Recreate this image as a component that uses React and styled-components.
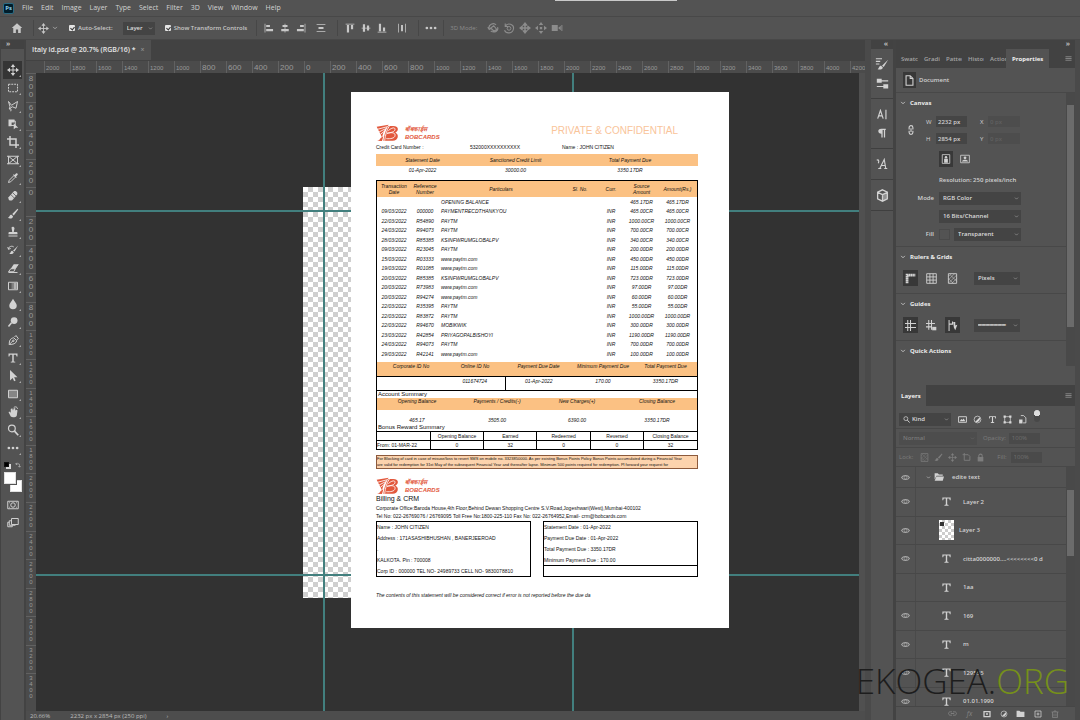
import React from 'react';
import styled, { createGlobalStyle } from 'styled-components';

const GlobalStyle = createGlobalStyle`
  * { box-sizing: border-box; }
  body {
    margin: 0;
    background: #323232;
    color: #d2d2d2;
    font-family: "Open Sans", "Noto Sans", sans-serif;
    font-size: 7px;
    line-height: 10px;
  }
  button, input, select { font: inherit; color: inherit; border: 0; padding: 0; background: none; margin: 0; }
`;

/* ---------- icons ---------- */

const Svg = styled.svg`
  display: block;
  flex: none;
  width: ${p => p.$size || 14}px;
  height: ${p => p.$size || 14}px;
  fill: none;
  stroke: currentColor;
  stroke-width: 1.3;
`;

const F = { fill: 'currentColor', stroke: 'none' };

const icons = {
  home: <path {...F} d="M8 1.5 1 8h2v6.5h3.5V10h3v4.500H13V8h2z" />,
  move: <><path d="M8 3v10M3 8h10" /><path {...F} d="m8 0 3 4H5zM8 16l3-4H5zM0 8l4-3v6zM16 8l-4-3v6z" /></>,
  marquee: <path strokeDasharray="2.500 1.300" d="M2 3h12v10H2z" />,
  lasso: <path d="M2 2l4 5 8-5-2 9-5-2-4 3 1-3zM3 12c2-1 3 0 2 3" />,
  objectSelect: <><path {...F} d="M2 2h8v4H6v5H2z" /><path d="M5 4h6v6H5z" /><path {...F} d="m9 7 6 6h-3.500L9 15z" /></>,
  crop: <path strokeWidth="2" d="M4 0v12h12M0 4h12v12" />,
  frame: <path d="M2 3h12v10H2zM2 3l12 10M14 3 2 13M0 3h2M14 3h2M0 13h2M14 13h2" />,
  eyedropper: <><path d="M9 5 3 11l-1 3 3-1 6-6" /><path {...F} d="m8 4 4 4 1-1-1-1 2-2c1-1 0-3-2-2l-2 2-1-1z" /></>,
  heal: <><path {...F} d="M9 2c2-2 6 1 4.500 4L7 13.500c-3 2-6-1-5-4z" /><path stroke="#535353" strokeWidth="1" d="m5 6 5 5M8 4l4 4" /></>,
  brush: <path {...F} d="M14 1 7 8l2 2 6-8zM6 9c-3 0-2 3-5 4 3 2 7 1 7-2z" />,
  stamp: <path {...F} d="M6 2c1-2 4-1 4 1L9 8h4c1 0 1 1 1 3H2c0-2 0-3 1-3h4zM2 12.500h12V14H2z" />,
  history: <><path {...F} d="M15 2 8 9l2 1zM7 9c-2 0-2 3-4 4 3 1 6 0 6-2z" /><path d="M2 7c0-4 5-5 7-3M1 4l1 3 3-1" /></>,
  eraser: <><path {...F} d="M9 3h6l-4 6H5z" /><path d="M5 9h6l-2 4H2zM11 9l4-6M2 14h12" /></>,
  gradient: <><path d="M2 3h12v10H2z" /><path {...F} opacity=".35" d="M6 4h3v8H6z" /><path {...F} opacity=".75" d="M9 4h4v8H9z" /></>,
  drop: <path {...F} d="M8 1c2 4 5 6 5 9a5 5 0 0 1-10 0c0-3 3-5 5-9z" />,
  dodge: <><circle {...F} cx="9.500" cy="6" r="4.500" /><path strokeWidth="2" d="m6 9-4 5" /></>,
  pen: <><path d="M3 14c0-5 1-8 6-9l4 4c-1 4-5 5-10 5zl5-5M10 4l2-2 3 4-2 2" /><circle cx="8.500" cy="9" r="1" /></>,
  type: <path {...F} d="M2 2h12v4h-1.200L12 3.600H9V12.500l2 .6V14H5v-.9l2-.6V3.600H4L3.200 6H2z" />,
  arrow: <path {...F} d="M4 0v14l3.500-3.500 2 4.500 2-1-2-4.500H14z" />,
  rect: <path fill="#858585" d="M2 3h12v10H2z" />,
  hand: <><path {...F} d="M2 8c2-1 2 0 3 1V4l2-1 1 3 1-3h2v3l2-1 1 1-1 7c-1 2-6 3-8 1z" /><path d="M9 2c3-2 5 0 5 2" /></>,
  zoom: <><circle cx="6.500" cy="6" r="4.500" strokeWidth="1.600" /><path strokeWidth="2.200" d="m10 9.500 5 5.500" /></>,
  dots: <><circle {...F} cx="2.500" cy="8" r="1.800" /><circle {...F} cx="8" cy="8" r="1.800" /><circle {...F} cx="13.500" cy="8" r="1.800" /></>,
  mask: <><path d="M1 3h14v10H1z" /><circle cx="8" cy="8" r="3" /><path d="M3 5h1M12 5h1M3 11h1M12 11h1" /></>,
  screens: <path d="M6 2h9v8H6zM6 5H3v6h8v-1M3 7H1v6h6v-2" />,
  alignLeft: <path {...F} d="M1 1h1.200v14H1zM3.500 3h6v3.500h-6zM3.500 9.500h11V13h-11z" />,
  alignCenter: <path {...F} d="M7.400 1h1.200v14H7.400zM4 3h8v3.500H4zM2 9.500h12V13H2z" />,
  alignRight: <path {...F} d="M13.800 1H15v14h-1.200zM6.500 3h6v3.500h-6zM1.500 9.500h11V13h-11z" />,
  distribute: <path {...F} d="M1 2h14v1.200H1zM4 6.500h8v3H4zM1 12.800h14V14H1z" />,
  alignTop: <path {...F} d="M1 1h14v1.200H1zM3 3h3.500v12H3zM9.500 3H13v7H9.500z" />,
  alignMiddle: <path {...F} d="M1 7.400h14v1.200H1zM3 2h3.500v12H3zM9.500 4H13v8H9.500z" />,
  alignBottom: <path {...F} d="M1 13.800h14V15H1zM3 1h3.500v12H3zM9.500 7H13v6H9.500z" />,
  distributeV: <path {...F} d="M2 1h1.200v14H2zM6.500 3h3v10h-3zM12.800 1H14v14h-1.200z" />,
  orbit: <path strokeWidth="1.600" d="M3 9C1 4 9 0 12 4M5 12c5 3 11 0 9-5M1 7l2 3 3-2M9 5l4 5-4 2-4-4z" />,
  roll: <><path strokeWidth="1.500" d="M3 2v4h4M3 6c3-6 12-3 11 3-1 7-10 7-12 2" /><circle cx="8" cy="8.500" r="2.500" /></>,
  pan: <><path strokeWidth="2" d="M8 3v10M3 8h10" /><path {...F} d="m8 0 4 5H4zM8 16l4-5H4zM0 8l5-4v8zM16 8l-5-4v8z" /></>,
  slide: <path {...F} d="m8 0 3 4H5zM8 16l3-4H5zM0 8l4-3v6zM16 8l-4-3v6zM6.500 6.500h3v3h-3z" />,
  camera: <><path {...F} d="M1 4h8v8H1zM9.500 8 13 5v6z" /><path d="M14.500 4v8" /></>,
  chevron: <path strokeWidth="1.800" d="m3 5 5 5 5-5" />,
  menu: <path strokeWidth="1.500" d="M1 4h14M1 8h14M1 12h14" />,
  brushes: <><path d="M1 2h7M1 5h5M1 8h4" /><path {...F} d="M15 3 8 10l2 1.500zM7 10c-3 0-2 3-4 4 3 1 6 0 6-2z" /></>,
  sliders: <path {...F} d="M1 2h6v5H1zM7 4h8v1.400H7zM9 9h6v5H9zM1 11h8v1.400H1z" />,
  character: <path strokeWidth="1.700" d="m1 14 4-12 4 12M2.500 10h5M13 1v14" />,
  paragraph: <path {...F} d="M14 1H7C0 1 1 9 7 9v6h2V3h2v12h2V3h1z" />,
  glyphs: <path strokeWidth="1.500" d="M5 14 11 2l2 12M7 10h6M3 14h4M11 14h4M1 3c3-2 3 2 2 4" />,
  cube: <><path strokeWidth="1.600" d="m8 1 6 3v8l-6 3-6-3V4zM2 4l6 3 6-3M8 7v8" /><path {...F} opacity=".5" d="m8 7 6-3v8l-6 3z" /></>,
  file: <path strokeWidth="1.600" d="M3 1h6l4 4v10H3zM9 1v4h4" />,
  link: <path strokeWidth="1.800" d="M5 7V4c0-4 6-4 6 0v3M5 9v3c0 4 6 4 6 0V9M8 5v6" />,
  portrait: <><path d="M2 1h12v14H2z" /><circle {...F} cx="8" cy="5" r="2" /><path {...F} d="M5 7.500h6V14H5z" /></>,
  landscape: <><path d="M1 2h14v12H1z" /><circle {...F} cx="8" cy="6" r="2.200" /><path {...F} d="M3 12c1-4 9-4 10 0z" /></>,
  rulers: <path strokeWidth="4" strokeDasharray="2.400 .4" d="M3 15V3h12" />,
  grid: <path d="M1 1h14v14H1zM5.700 1v14M10.300 1v14M1 5.700h14M1 10.300h14" />,
  pixelGrid: <><path d="M2 1h12v14H2z" /><path opacity=".6" d="m2 5 4-4M2 10l9-9M3 14 14 3M7 15l7-7M2 8l7 7M5 3l9 9" /></>,
  guides: <path strokeWidth="1.500" d="M4 0v16M8 0v16M0 5h16M0 11h16" />,
  guidesLock: <><path strokeWidth="1.500" d="M4 0v14M8 0v14M0 5h13M0 10h8" /><path {...F} d="M9 10h6v5H9z" /></>,
  smartGuides: <><path strokeWidth="1.500" d="M3 0v16M8 2v5M3 6h5" /><path {...F} d="M9 3h3v5l3-1-3 8-2-4z" /></>,
  image: <><path strokeWidth="1.600" d="M1 3h14v10H1z" /><path {...F} d="m3 11 3-4 2 2 2-3 3 5z" /></>,
  adjust: <><circle cx="8" cy="8" r="6" /><path {...F} d="M4 12A6 6 0 0 0 12 4z" /></>,
  shape: <><path d="M3 3h10v10H3z" /><path {...F} d="M1 1h4v4H1zM11 1h4v4h-4zM1 11h4v4H1zM11 11h4v4h-4z" /></>,
  artboard: <path strokeWidth="1.600" d="M4 0v13h10V6L11 3H1" />,
  smart: <><path strokeWidth="1.500" d="M5 1h5l4 4v9H9" /><path {...F} d="M2 8h6v7H2z" /></>,
  lock: <><path strokeWidth="1.800" d="M5 7V5c0-4 6-4 6 0v2" /><path {...F} d="M3 7h10v8H3z" /></>,
  eye: <><path strokeWidth="1.800" d="M1 8c3-5 11-5 14 0-3 5-11 5-14 0z" /><circle cx="8" cy="8" r="2.500" /></>,
  folder: <path {...F} d="M1 2h5l2 2h6v2H4l-3 6zM4 7h12l-2 7H1z" />,
  folderClosed: <path {...F} d="M1 3h5l2 2h7v9H1z" />,
  plus: <path strokeWidth="1.500" d="M2 2h12v12H2zM8 5v6M5 8h6" />,
  maskAdd: <><path strokeWidth="2.500" d="M2 3h12v10H2z" /><circle {...F} cx="8" cy="8" r="2" /></>,
  trash: <path strokeWidth="1.500" d="M1 4h14M6 4V2h4v2M3 4v11h10V4M6 7v6M10 7v6" />,
  chain: <path strokeWidth="1.500" d="M7 5H4c-4 0-4 6 0 6h3M9 5h3c4 0 4 6 0 6H9M5 8h6" />,
  swap: <path strokeWidth="1.600" d="M5 2 2 5l3 3M2 5h8c2 0 2 1 2 8M9 11l3 3 3-3" />,
};

const Icon = ({ name, size }) => (
  <Svg viewBox="0 0 16 16" $size={size} aria-hidden="true">{icons[name]}</Svg>
);

/* ---------- frame ---------- */

const Window = styled.div`
  position: relative;
  display: flex;
  flex-direction: column;
  height: 100vh;
  overflow: hidden;
  background: #535353;
`;

const MenuBar = styled.nav`
  position: relative;
  display: flex;
  align-items: center;
  gap: 8px;
  height: 17px;
  padding-left: 3px;
  border-bottom: 1px solid #484848;
  font-weight: 500;
  button { line-height: 12px; }
`;

const PsLogo = styled.span`
  width: 11px;
  height: 11px;
  border: 1px solid #2b6b83;
  border-radius: 2px;
  background: #001d2b;
  color: #8fd0ee;
  font-size: 6px;
  font-weight: 700;
  line-height: 8px;
  text-align: center;
`;

const TitleNotch = styled.div`
  position: absolute;
  top: 0;
  left: 555px;
  width: 122px;
  height: 1px;
  background: #c9c9c9;
`;

const OptionsBar = styled.div`
  display: flex;
  align-items: center;
  height: 23px;
  padding-left: 9px;
  border-bottom: 1px solid #484848;
  color: #c8c8c8;
  font-size: 6px;
`;

const Group = styled.div`
  display: flex;
  align-items: center;
  gap: ${p => p.$gap || 0}px;
  padding: 0 ${p => p.$pad || 0}px;
  border-left: ${p => (p.$line ? '1px solid #474747' : 'none')};
  color: ${p => (p.$dim ? '#8c8c8c' : 'inherit')};
`;

const IconButton = styled.button`
  display: grid;
  place-items: center;
  width: ${p => p.$w || 16}px;
  height: ${p => p.$h || 16}px;
  background: ${p => (p.$on ? '#383838' : 'transparent')};
  color: ${p => (p.$dim ? '#858585' : 'inherit')};
`;

const Check = styled.label`
  display: flex;
  align-items: center;
  gap: 3px;
  font-weight: 600;
  white-space: nowrap;
  input {
    appearance: none;
    width: 6px;
    height: 6px;
    border-radius: 1px;
    background: #e4e4e4;
  }
  input:checked::after {
    content: "";
    display: block;
    width: 2px;
    height: 3px;
    margin: 1px 2px;
    border: solid #333;
    border-width: 0 1px 1px 0;
    rotate: 40deg;
  }
`;

const SelectWrap = styled.span`
  position: relative;
  display: block;
  width: ${p => p.$w}px;
  color: ${p => (p.$dim ? '#7a7a7a' : '#dcdcdc')};
  select {
    appearance: none;
    display: block;
    width: 100%;
    height: 13px;
    padding-left: ${p => p.$indent || 4}px;
    background: ${p => (p.$dim ? '#4d4d4d' : '#444')};
    font-size: 6px;
    font-weight: 600;
  }
  svg { position: absolute; right: 2px; top: 4px; opacity: .7; pointer-events: none; }
`;

const Select = ({ label, value, ...rest }) => (
  <SelectWrap {...rest}>
    <select aria-label={label} defaultValue={value}><option>{value}</option></select>
    <Icon name="chevron" size={5} />
  </SelectWrap>
);

const Body = styled.div`
  display: flex;
  flex: 1;
  min-height: 0;
  background: #424242;
`;

const DockHead = styled.div`
  height: 9px;
  padding: 0 5px;
  background: #424242;
  color: #bdbdbd;
  font-size: 7px;
  font-weight: 700;
  line-height: 8px;
  text-align: ${p => p.$align || 'left'};
`;

const Toolbox = styled.aside`
  width: 26px;
  border: solid #434343;
  border-width: 0 2px 0 1px;
  background: #535353;
`;

const Tools = styled.div`
  display: grid;
  justify-items: center;
  padding-top: 12px;
`;

const Tool = styled.button`
  position: relative;
  display: grid;
  place-items: center;
  width: 19px;
  height: 18px;
  background: ${p => (p.$on ? '#353535' : 'transparent')};
  &::after {
    content: "";
    position: absolute;
    right: 1px;
    bottom: 2px;
    border: 1px solid;
    border-color: transparent #aaa #aaa transparent;
  }
`;

const SwatchTop = styled.div`
  display: flex;
  justify-content: space-between;
  width: 17px;
  height: 15px;
  padding-top: 5px;
`;

const DefaultSwatch = styled.i`
  width: 5px;
  height: 5px;
  border: 1px solid #111;
  background: #000;
  box-shadow: 2px 2px 0 #ddd;
`;

const Swatches = styled.div`
  position: relative;
  width: 18px;
  height: 20px;
  margin-bottom: 4px;
  i { position: absolute; width: 12px; height: 12px; background: #fff; border: 1px solid #e0e0e0; }
  i:first-child { right: 0; bottom: 0; }
  i:last-child { left: 0; top: 0; outline: 1px solid #535353; }
`;

/* ---------- document window ---------- */

const DocumentArea = styled.main`
  display: flex;
  flex: 1;
  flex-direction: column;
  min-width: 0;
  border-right: 6px solid #4a4a4a;
`;

const TabStrip = styled.div`
  height: 21px;
  background: #424242;
`;

const DocTab = styled.div`
  display: inline-flex;
  align-items: center;
  gap: 5px;
  height: 20px;
  padding: 0 6px;
  background: #505050;
  font-size: 7px;
  font-weight: 600;
  color: #e6e6e6;
  button { color: #8f8f8f; }
`;

const RulerTop = styled.div`
  display: flex;
  height: 12px;
  padding-left: 18px;
  overflow: hidden;
  background: #4b4b4b;
  color: #9a9a9a;
  font-family: "Liberation Sans", sans-serif;
  line-height: 14px;
`;

const RulerMark = styled.span`
  flex: 0 0 26px;
  padding-left: 1px;
  border-left: 1px solid #616161;
  font-size: ${p => (p.$long ? 6 : 8)}px;
`;

const Workspace = styled.div`
  display: flex;
  flex: 1;
  min-height: 0;
`;

const RulerLeft = styled.div`
  display: flex;
  flex-direction: column;
  width: 10px;
  padding-bottom: 9px;
  background: #4b4b4b;
  color: #9a9a9a;
  font-family: "Liberation Sans", sans-serif;
  text-align: center;
`;

const RulerStack = styled.div`
  display: flex;
  flex: 1 1 0;
  flex-direction: column;
  min-height: 0;
  padding-top: 1px;
  border-top: 1px solid #616161;
  font-size: ${p => (p.$long ? 6 : 8)}px;
  line-height: ${p => (p.$long ? 6 : 8)}px;
`;

const Canvas = styled.div`
  position: relative;
  flex: 1;
  overflow: hidden;
  border-right: 6px solid #505050;
  background: #323232;
`;

const Guide = styled.i`
  position: absolute;
  background: #427f7e;
  ${p => (p.$x ? `left: ${p.$x}px; top: 0; bottom: 0; width: 2px;` : `top: ${p.$y}px; left: 0; right: 0; height: 2px;`)}
`;

const Artboard = styled.div`
  position: absolute;
  left: 267px;
  top: 114px;
  width: 269px;
  height: 411px;
  background: repeating-conic-gradient(#cfcfcf 0 25%, #fff 0 50%) 0 0 / 10px 10px;
`;

const StatusBar = styled.footer`
  display: flex;
  gap: 20px;
  height: 9px;
  padding-left: 4px;
  background: #4d4d4d;
  color: #bdbdbd;
  font-size: 6px;
  line-height: 10px;
`;

/* ---------- statement ---------- */

const Page = styled.article`
  position: absolute;
  left: 315px;
  top: 19px;
  width: 378px;
  height: 536px;
  padding: 32px 31px 0 25px;
  background: #fff;
  color: #111;
  font-family: "Liberation Sans", sans-serif;
  font-size: 5px;
  line-height: 8px;
`;

const PageHead = styled.header`
  display: flex;
  justify-content: space-between;
  height: 19px;
  padding-right: 20px;
`;

const Confidential = styled.h1`
  margin: 0;
  color: #f9c49a;
  font-size: 10px;
  font-weight: 400;
  line-height: 13px;
`;

const Brand = styled.div`
  display: flex;
  gap: 5px;
  height: 18px;
  color: #e2583c;
  svg { width: 24px; height: 18px; }
`;

const BrandName = styled.div`
  padding-top: 1px;
  font-size: 6px;
  font-weight: 700;
  font-style: italic;
  line-height: 8px;
`;

const HolderRow = styled.div`
  display: grid;
  grid-template-columns: 94px 92px 1fr;
  height: 11px;
`;

const Table = styled.table`
  width: 100%;
  height: ${p => (p.$h ? `${p.$h}px` : 'auto')};
  table-layout: fixed;
  border-collapse: collapse;
  font-style: italic;
  text-align: center;
  th, td { padding: 0; font-weight: 400; white-space: nowrap; }
  td.left { text-align: left; padding-left: 2px; }
`;

const OrangeHead = styled.thead`
  background: #fbc183;
  tr { height: ${p => p.$h}px; }
  th { vertical-align: ${p => p.$align || 'middle'}; line-height: 6px; }
`;

const Row = styled.tr`
  height: ${p => p.$h}px;
  vertical-align: ${p => p.$align || 'middle'};
`;

const Frame = styled.section`
  margin-top: 6px;
  border: 1px solid #000;
`;

const Transactions = styled(Table)`
  line-height: 6px;
  tbody td { font-size: 5px; }
`;

const DueTable = styled(Table)`
  margin-top: 3px;
  border-bottom: 1px solid #000;
  th { line-height: 9px; }
  tbody { border-top: 1px solid #000; }
  tbody td:nth-child(3) { border-left: 1px solid #000; }
`;

const SectionTitle = styled.h2`
  height: 7px;
  margin: 0;
  padding-left: 1px;
  font-size: 6px;
  font-weight: 400;
  line-height: 7px;
`;

const BonusTable = styled(Table)`
  font-style: normal;
  line-height: 6px;
  th, td { border: 1px solid #000; }
  tr > *:first-child { border-left: 0; text-align: left; }
  tr > *:last-child { border-right: 0; }
  tr:last-child > * { border-bottom: 0; }
`;

const Note = styled.p`
  height: 14px;
  margin: 5px 0 8px;
  border: 1px solid #8c5a3c;
  background: #fcd3ad;
  font-size: 4px;
  line-height: 6px;
  white-space: nowrap;
  overflow: hidden;
`;

const Billing = styled.h2`
  margin: 0 0 1px;
  font-size: 7px;
  font-weight: 400;
  line-height: 8px;
`;

const Line = styled.p`
  margin: 0;
  white-space: nowrap;
`;

const Boxes = styled.div`
  display: grid;
  grid-template-columns: 155px 155px;
  gap: 12px;
  height: 56px;
  margin-top: 1px;
  line-height: 11px;
`;

const Box = styled.div`
  height: 56px;
  border: 1px solid #000;
`;

const BoxTop = styled.div`
  height: 44px;
  border-bottom: 1px solid #000;
`;

const Disclaimer = styled.p`
  margin: 14px 0 0;
  font-style: italic;
  white-space: nowrap;
`;

const transactions = [
  ['', '', 'OPENING BALANCE', '', '465.17DR'],
  ['09/03/2022', '000000', 'PAYMENTRECDTHANKYOU', 'INR', '465.00CR'],
  ['22/03/2022', 'R54890', 'PAYTM', 'INR', '1000.00CR'],
  ['24/03/2022', 'R94073', 'PAYTM', 'INR', '700.00CR'],
  ['28/03/2022', 'R85385', 'KSINFWRUMGLOBALPV', 'INR', '340.00CR'],
  ['09/03/2022', 'R23045', 'PAYTM', 'INR', '200.00DR'],
  ['15/03/2022', 'R03333', 'www.paytm.com', 'INR', '450.00DR'],
  ['19/03/2022', 'R01085', 'www.paytm.com', 'INR', '115.00DR'],
  ['20/03/2022', 'R85385', 'KSINFWRUMGLOBALPV', 'INR', '723.00DR'],
  ['20/03/2022', 'R73983', 'www.paytm.com', 'INR', '97.00DR'],
  ['20/03/2022', 'R94274', 'www.paytm.com', 'INR', '60.00DR'],
  ['22/03/2022', 'R35395', 'PAYTM', 'INR', '55.00DR'],
  ['22/03/2022', 'R83872', 'PAYTM', 'INR', '1000.00DR'],
  ['22/03/2022', 'R94670', 'MOBIKWIK', 'INR', '300.00DR'],
  ['23/03/2022', 'R42854', 'PRIYAGOPALBISHOYI', 'INR', '1190.00DR'],
  ['24/03/2022', 'R94073', 'PAYTM', 'INR', '700.00DR'],
  ['29/03/2022', 'R42141', 'www.paytm.com', 'INR', '100.00DR'],
];

const Logo = () => (
  <Brand>
    <svg viewBox="0 0 72 54" aria-hidden="true">
      <path fill="currentColor" d="M2 8 38 2C28 12 21 24 18 40zM3 50c5 0 8-2 11-8l8-5-4 14z" />
      <path fill="currentColor" d="M36 6h16c16 0 18 14 6 20 12 4 10 24-8 24H22c2-12 6-30 14-44z" />
      <path fill="none" stroke="#fff" strokeWidth="2.500" d="M4 16 34 8M9 24l20-10M13 31l13-10M40 6C32 18 28 34 26 50M37 20c8-8 20-12 20-4s-14 10-24 12c14-4 26-2 24 7-1 8-14 10-26 9" />
    </svg>
    <BrandName>बॉबकार्ड्स<br />BOBCARDS</BrandName>
  </Brand>
);

const Statement = () => (
  <Page>
    <PageHead><Logo /><Confidential>PRIVATE &amp; CONFIDENTIAL</Confidential></PageHead>
    <HolderRow>
      <span>Credit Card Number :</span><span>532000XXXXXXXXXX</span><span>Name : JOHN CITIZEN</span>
    </HolderRow>
    <Table>
      <colgroup><col width="93" /><col width="93" /><col /></colgroup>
      <OrangeHead $h={12}><tr><th>Statement Date</th><th>Sanctioned Credit Limit</th><th>Total Payment Due</th></tr></OrangeHead>
      <tbody><Row $h={8}><td>01-Apr-2022</td><td>30000.00</td><td>3350.17DR</td></Row></tbody>
    </Table>
    <Frame>
      <Transactions $h={178}>
        <colgroup>
          <col width="34" /><col width="28" /><col width="124" /><col width="34" /><col width="28" /><col width="33" /><col width="39" />
        </colgroup>
        <OrangeHead $h={16}>
          <tr>
            <th>Transaction<br />Date</th><th>Reference<br />Number</th><th>Particulars</th><th>Sl. No.</th>
            <th>Curr.</th><th>Source<br />Amount</th><th>Amount(Rs.)</th>
          </tr>
        </OrangeHead>
        <tbody>
          {transactions.map(([date, ref, what, curr, sum], i) => (
            <tr key={i}>
              <td>{date}</td><td>{ref}</td><td className="left">{what}</td><td />
              <td>{curr}</td><td>{sum}</td><td>{sum}</td>
            </tr>
          ))}
        </tbody>
      </Transactions>
      <DueTable>
        <colgroup><col width="68" /><col width="60" /><col width="67" /><col width="62" /><col /></colgroup>
        <OrangeHead $h={14} $align="top">
          <tr><th>Corporate ID No</th><th>Online ID No</th><th>Payment Due Date</th><th>Minimum Payment Due</th><th>Total Payment Due</th></tr>
        </OrangeHead>
        <tbody>
          <Row $h={14} $align="top"><td /><td>011674724</td><td>01-Apr-2022</td><td>170.00</td><td>3350.17DR</td></Row>
        </tbody>
      </DueTable>
      <SectionTitle>Account Summary</SectionTitle>
      <Table>
        <OrangeHead $h={12} $align="top">
          <tr><th>Opening Balance</th><th>Payments / Credits(-)</th><th>New Charges(+)</th><th>Closing Balance</th></tr>
        </OrangeHead>
        <tbody>
          <Row $h={14} $align="bottom"><td>465.17</td><td>3505.00</td><td>6390.00</td><td>3350.17DR</td></Row>
        </tbody>
      </Table>
      <SectionTitle>Bonus Reward Summary</SectionTitle>
      <BonusTable>
        <tbody>
          <Row $h={9}><th /><th>Opening Balance</th><th>Earned</th><th>Redeemed</th><th>Reversed</th><th>Closing Balance</th></Row>
          <Row $h={9}><td>From: 01-MAR-22</td><td>0</td><td>32</td><td>0</td><td>0</td><td>32</td></Row>
        </tbody>
      </BonusTable>
    </Frame>
    <Note>
      For Blocking of card in case of misuse/loss to revert SMS on mobile no. 3323850000. As per existing Bonus Points Policy Bonus Points accumulated during a Financial Year<br />
      are valid for redemption for 31st May of the subsequent Financial Year and thereafter lapse. Minimum 500 points required for redemption. Pl forward your request for
    </Note>
    <Logo />
    <Billing>Billing &amp; CRM</Billing>
    <Line>Corporate Office:Baroda House,4th Floor,Behind Dewan Shopping Centre S.V.Road,Jogeshwari(West),Mumbai-400102</Line>
    <Line>Tel No: 022-26769076 / 26769095 Toll Free No:1800-225-110 Fax No: 022-26764952,Email- crm@bobcards.com</Line>
    <Boxes>
      <Box>
        <Line>Name : JOHN CITIZEN</Line>
        <Line>Address : 171ASASHIBHUSHAN , BANERJEEROAD</Line>
        <Line>.</Line>
        <Line>KALKOTA. Pin : 700008</Line>
        <Line>Corp ID : 000000 TEL NO- 24989733 CELL NO- 9830078810</Line>
      </Box>
      <Box>
        <BoxTop>
          <Line>Statement Date : 01-Apr-2022</Line>
          <Line>Payment Due Date : 01-Apr-2022</Line>
          <Line>Total Payment Due : 3350.17DR</Line>
          <Line>Minimum Payment Due : 170.00</Line>
        </BoxTop>
      </Box>
    </Boxes>
    <Disclaimer>The contents of this statement will be considered correct if error is not reported before the due da</Disclaimer>
  </Page>
);

/* ---------- right side ---------- */

const IconDock = styled.aside`
  width: 25px;
  border-right: 3px solid #434343;
  background: #535353;
`;

const DockGroup = styled.div`
  display: grid;
  justify-items: center;
  gap: 3px;
  padding: 7px 0;
  border-bottom: 1px solid #3f3f3f;
`;

const Panels = styled.aside`
  display: flex;
  flex-direction: column;
  width: 184px;
  border-right: 5px solid #4a4a4a;
  background: #535353;
`;

const PanelTabs = styled.div`
  display: flex;
  height: ${p => p.$h}px;
  padding-right: 3px;
  background: #424242;
  font-size: 6px;
  color: #a5a5a5;
  > :last-child { margin-left: auto; align-self: center; }
`;

const PanelTab = styled.button`
  width: ${p => (p.$on ? 'auto' : '22px')};
  padding: 0 5px;
  overflow: hidden;
  background: ${p => (p.$on ? '#535353' : 'transparent')};
  color: ${p => (p.$on ? '#f0f0f0' : 'inherit')};
  font-weight: ${p => (p.$on ? 700 : 600)};
  text-align: left;
  & + & { padding-left: ${p => (p.$on ? 6 : 2)}px; padding-right: ${p => (p.$on ? 6 : 0)}px; }
`;

const DocRow = styled.div`
  display: flex;
  align-items: center;
  gap: 3px;
  height: 25px;
  padding-left: 7px;
  border-bottom: 1px solid #484848;
  font-size: 6px;
  font-weight: 600;
`;

const Scroller = styled.div`
  display: flex;
  height: ${p => (p.$h ? `${p.$h}px` : 'auto')};
  flex: ${p => (p.$h ? 'none' : 1)};
  min-height: 0;
  > :first-child { flex: 1; min-width: 0; }
`;

const ScrollTrack = styled.div`
  width: 9px;
  height: ${p => (p.$h ? `${p.$h}px` : 'auto')};
  padding: ${p => p.$top || 12}px 1px 0;
  background: #494949;
  &::before {
    content: "";
    display: block;
    height: ${p => p.$thumb}px;
    background: #6b6b6b;
  }
`;

const Section = styled.section`
  height: ${p => p.$h}px;
  border-bottom: 1px solid #484848;
`;

const SectionHead = styled.h3`
  display: flex;
  align-items: center;
  gap: 4px;
  height: 20px;
  margin: 0;
  padding-left: 4px;
  color: #ececec;
  font-size: 6px;
  font-weight: 700;
`;

const SizeGrid = styled.div`
  display: grid;
  grid-template-columns: 30px 10px 31px 13px 8px 32px;
  grid-auto-rows: 17px;
  align-items: center;
  font-size: 6px;
  > svg { grid-row: span 2; justify-self: center; }
  input { width: 100%; height: 11px; padding-left: 2px; background: #454545; font-weight: 600; }
  input:disabled { background: #4d4d4d; color: #606060; }
`;

const FieldRow = styled.div`
  display: grid;
  grid-template-columns: 38px 1fr;
  column-gap: 5px;
  align-items: center;
  height: 18px;
  font-size: 6px;
  font-weight: 600;
  > :first-child { text-align: right; }
`;

const IconRow = styled.div`
  display: flex;
  align-items: center;
  gap: 6px;
  height: ${p => p.$h || 22}px;
  padding-left: ${p => p.$pad || 7}px;
  > span { margin-left: 8px; }
`;

const FillSwatch = styled.i`
  width: 11px;
  height: 11px;
  border: 1px solid #4a4a4a;
`;

const Bar = styled.div`
  display: flex;
  align-items: center;
  gap: ${p => p.$gap}px;
  height: ${p => p.$h}px;
  padding: 0 3px;
  border-bottom: 1px solid #484848;
  color: ${p => (p.$dim ? '#7d7d7d' : '#d8d8d8')};
  font-size: 6px;
`;

const FilterBar = styled(Bar)`
  padding-top: 4px;
`;

const FilterWrap = styled.div`
  position: relative;
  > svg { position: absolute; z-index: 1; left: 4px; top: 3px; }
`;

const Knob = styled.button`
  align-self: flex-start;
  width: 6px;
  height: 12px;
  background: radial-gradient(circle at 3px 3px, #ddd 3px, #484848 3px);
  border-radius: 3px;
`;

const Percent = styled.input`
  width: 31px;
  height: 11px;
  padding-left: 3px;
  background: #4a4a4a;
  color: #6f6f6f;
`;

const LayerView = styled.div`
  overflow: hidden;
`;

const LayerList = styled.ul`
  display: grid;
  grid-template-rows: 21px repeat(8, 1fr);
  height: calc(100% + 10px);
  margin: 0;
  padding: 0;
  list-style: none;
`;

const LayerRow = styled.li`
  display: grid;
  grid-template-columns: 20px ${p => (p.$group ? 10 : 17)}px 26px 1fr;
  align-items: center;
  min-height: 0;
  border-bottom: 1px solid #484848;
  font-size: 6px;
  font-weight: 600;
  white-space: nowrap;
  > :first-child { align-self: stretch; width: 20px; height: auto; border-right: 1px solid #4a4a4a; color: #a9a9a9; }
  > :nth-child(3) { justify-self: center; }
  > :last-child { padding-left: ${p => (p.$text ? 4 : 0)}px; }
`;

const Thumb = styled.i`
  width: 15px;
  height: 20px;
  background: linear-gradient(#333, #333) 1px 2px / 4px 4px no-repeat, repeating-conic-gradient(#ccc 0 25%, #fff 0 50%) 0 0 / 6px 6px;
`;

const GroupMark = styled.span`
  display: flex;
  align-items: center;
  gap: 3px;
  margin-left: -8px;
`;

const LayerFooter = styled.footer`
  display: flex;
  align-items: center;
  justify-content: flex-end;
  height: 14px;
  padding-right: 12px;
  border-top: 1px solid #464646;
  font-size: 7px;
  font-style: italic;
`;

const Watermark = styled.div`
  position: absolute;
  right: 11px;
  bottom: 16px;
  color: #1d1d1d;
  font-family: "Open Sans", sans-serif;
  font-size: 35px;
  font-weight: 300;
  line-height: 46px;
  pointer-events: none;
  span { color: #76901a; }
`;

const layers = [
  ['Layer 2', 'type', true],
  ['Layer 3', 'thumb', true],
  ['citta0000000....<<<<<<<<0 d', 'type', true],
  ['1aa', 'type', false],
  ['169', 'type', true],
  ['m', 'type', true],
  ['129555', 'type', true],
  ['01.01.1990', 'type', true],
];

const tools = ['move', 'marquee', 'lasso', 'objectSelect', 'crop', 'frame', 'eyedropper', 'heal', 'brush', 'stamp', 'history',
  'eraser', 'gradient', 'drop', 'dodge', 'pen', 'type', 'arrow', 'rect', 'hand', 'zoom', 'dots'];

const panelTabs = ['Swatc', 'Gradi', 'Patter', 'Histor', 'Action'];

const topMarks = Array.from({ length: 32 }, (_, i) => String(Math.abs(i * 200 - 2000)));
const leftMarks = Array.from({ length: 22 }, (_, i) => String(Math.abs(i * 200 - 800)));

const Btn = ({ name, size = 10, ...rest }) => (
  <IconButton type="button" aria-label={name} {...rest}><Icon name={name} size={size} /></IconButton>
);

const Head = ({ children }) => <SectionHead><Icon name="chevron" size={6} />{children}</SectionHead>;

export default function App() {
  return (
    <Window>
      <GlobalStyle />
      <MenuBar>
        <PsLogo>Ps</PsLogo>
        {['File', 'Edit', 'Image', 'Layer', 'Type', 'Select', 'Filter', '3D', 'View', 'Window', 'Help'].map(m => (
          <button type="button" key={m}>{m}</button>
        ))}
        <TitleNotch />
      </MenuBar>
      <OptionsBar>
        <Btn name="home" size={12} />
        <Group $pad={8}>
          <Group $line $pad={1}><Btn name="move" size={11} /></Group>
          <Icon name="chevron" size={6} />
        </Group>
        <Group $gap={10} $pad={3}>
          <Check><input type="checkbox" defaultChecked />Auto-Select:</Check>
          <Select label="Auto-select target" value="Layer" $w={32} />
          <Check><input type="checkbox" defaultChecked />Show Transform Controls</Check>
        </Group>
        <Group $pad={3} />
        <Group $line $pad={4}>
          <Btn name="alignLeft" /><Btn name="alignCenter" /><Btn name="alignRight" />
          <Group $pad={4}><Btn name="distribute" /></Group>
        </Group>
        <Group $line $pad={4}>
          <Btn name="alignTop" /><Btn name="alignMiddle" /><Btn name="alignBottom" />
          <Group $pad={4}><Btn name="distributeV" /></Group>
        </Group>
        <Group $line $pad={4}><Btn name="dots" size={12} /></Group>
        <Group $line $dim $pad={6}>
          3D Mode:
          <Group $pad={8}>
            <Btn name="orbit" size={12} /><Btn name="roll" size={12} /><Btn name="pan" size={12} />
            <Btn name="slide" size={12} /><Btn name="camera" size={12} />
          </Group>
        </Group>
      </OptionsBar>

      <Body>
        <Toolbox>
          <DockHead>»</DockHead>
          <Tools>
            {tools.map((t, i) => (
              <Tool type="button" key={t} aria-label={t} $on={i === 0}><Icon name={t} size={12} /></Tool>
            ))}
            <SwatchTop><DefaultSwatch /><Icon name="swap" size={6} /></SwatchTop>
            <Swatches><i /><i /></Swatches>
            <Btn name="mask" size={12} $h={18} />
            <Btn name="screens" size={12} $h={18} />
          </Tools>
        </Toolbox>

        <DocumentArea>
          <TabStrip>
            <DocTab>Italy id.psd @ 20.7% (RGB/16) * <button type="button" aria-label="Close">×</button></DocTab>
          </TabStrip>
          <RulerTop>{topMarks.map((m, i) => <RulerMark key={i} $long={m.length > 3}>{m}</RulerMark>)}</RulerTop>
          <Workspace>
            <RulerLeft>
              {leftMarks.map((m, i) => (
                <RulerStack key={i} $long={m.length > 3}>{m.split('').map((d, j) => <span key={j}>{d}</span>)}</RulerStack>
              ))}
            </RulerLeft>
            <Canvas>
              <Artboard />
              <Guide $x={287} /><Guide $x={536} />
              <Guide $y={137} /><Guide $y={501} />
              <Statement />
            </Canvas>
          </Workspace>
          <StatusBar><span>20.66%</span><span>2232 px x 2854 px (250 ppi)</span><span>›</span></StatusBar>
        </DocumentArea>

        <IconDock>
          <DockHead $align="right">«</DockHead>
          <DockGroup><Btn name="brushes" size={14} /><Btn name="sliders" size={13} /></DockGroup>
          <DockGroup><Btn name="character" size={11} /><Btn name="paragraph" size={10} /></DockGroup>
          <DockGroup><Btn name="glyphs" size={12} /></DockGroup>
          <DockGroup><Btn name="cube" size={13} /></DockGroup>
        </IconDock>

        <Panels>
          <DockHead $align="right">»</DockHead>
          <PanelTabs $h={19}>
            {panelTabs.map(t => <PanelTab type="button" key={t}>{t}</PanelTab>)}
            <PanelTab type="button" $on>Properties</PanelTab>
            <Icon name="menu" size={7} />
          </PanelTabs>
          <DocRow><IconButton type="button" aria-label="Document" $w={13} $on><Icon name="file" size={11} /></IconButton>Document</DocRow>
          <Scroller $h={292}>
            <div>
              <Section $h={154}>
                <Head>Canvas</Head>
                <SizeGrid>
                  <Icon name="link" size={10} />
                  <label htmlFor="w">W</label><input id="w" defaultValue="2232 px" />
                  <i /><label htmlFor="x">X</label><input id="x" defaultValue="0 px" disabled />
                  <label htmlFor="h">H</label><input id="h" defaultValue="2854 px" />
                  <i /><label htmlFor="y">Y</label><input id="y" defaultValue="0 px" disabled />
                </SizeGrid>
                <IconRow $h={24} $pad={43}><Btn name="portrait" $w={14} $on /><Btn name="landscape" $w={12} /></IconRow>
                <FieldRow><i /><span>Resolution: 250 pixels/inch</span></FieldRow>
                <FieldRow><span>Mode</span><Select label="Mode" value="RGB Color" $w={82} /></FieldRow>
                <FieldRow><i /><Select label="Bit depth" value="16 Bits/Channel" $w={82} /></FieldRow>
                <FieldRow><span>Fill</span><Group $gap={4}><FillSwatch /><Select label="Fill" value="Transparent" $w={67} /></Group></FieldRow>
              </Section>
              <Section $h={47}>
                <Head>Rulers &amp; Grids</Head>
                <IconRow>
                  <Btn name="rulers" size={11} $w={15} $on /><Btn name="grid" size={11} $w={15} /><Btn name="pixelGrid" size={11} $w={15} />
                  <Select label="Units" value="Pixels" $w={46} />
                </IconRow>
              </Section>
              <Section $h={47}>
                <Head>Guides</Head>
                <IconRow>
                  <Btn name="guides" size={11} $w={15} $on /><Btn name="guidesLock" size={11} $w={15} /><Btn name="smartGuides" size={11} $w={15} $on />
                  <Select label="Guide style" value="━━━━━━━" $w={46} />
                </IconRow>
              </Section>
              <Head>Quick Actions</Head>
            </div>
            <ScrollTrack $h={273} $thumb={222} />
          </Scroller>

          <PanelTabs $h={21}><PanelTab type="button" $on>Layers</PanelTab><Icon name="menu" size={7} /></PanelTabs>
          <FilterBar $h={23} $gap={1}>
            <FilterWrap><Icon name="zoom" size={7} /><Select label="Filter" value="Kind" $w={52} $indent={13} /></FilterWrap>
            <Group $pad={3}>
              <Btn name="image" size={9} $w={15} /><Btn name="adjust" size={9} $w={15} /><Btn name="type" size={9} $w={15} />
              <Btn name="shape" size={9} $w={15} /><Btn name="smart" size={9} $w={15} />
            </Group>
            <Knob type="button" aria-label="Filter toggle" />
          </FilterBar>
          <Bar $h={19} $gap={6} $dim>
            <Select label="Blend mode" value="Normal" $w={78} $dim />
            <Group $gap={3}><label htmlFor="opacity">Opacity:</label><Percent id="opacity" defaultValue="100%" /></Group>
          </Bar>
          <Bar $h={19} $gap={4} $dim>
            Lock:
            <Group>
              <Btn name="pixelGrid" size={9} $w={14} /><Btn name="brush" size={9} $w={14} /><Btn name="move" size={9} $w={14} />
              <Btn name="artboard" size={9} $w={14} /><Btn name="lock" size={9} $w={14} />
            </Group>
            <Group $pad={6} $gap={4}><label htmlFor="fill">Fill:</label><Percent id="fill" defaultValue="100%" /></Group>
          </Bar>
          <Scroller>
            <LayerView>
              <LayerList>
                <LayerRow $group>
                  <Btn name="eye" size={9} /><i />
                  <GroupMark><Icon name="chevron" size={5} /><Icon name="folder" size={10} /></GroupMark>
                  <span>edite text</span>
                </LayerRow>
                {layers.map(([name, kind, visible]) => (
                  <LayerRow key={name} $text={kind === 'type'}>
                    <IconButton type="button" aria-label="Visibility">{visible && <Icon name="eye" size={9} />}</IconButton>
                    <i />
                    {kind === 'type' ? <Icon name="type" size={11} /> : <Thumb />}
                    <span>{name}</span>
                  </LayerRow>
                ))}
              </LayerList>
            </LayerView>
            <ScrollTrack $top={23} $thumb={66} />
          </Scroller>
          <LayerFooter>
            <Btn name="chain" size={9} $w={17} $h={12} $dim />
            <IconButton type="button" $w={17} $h={12} $dim>fx</IconButton>
            <Btn name="maskAdd" size={8} $w={17} $h={12} /><Btn name="adjust" size={8} $w={17} $h={12} />
            <Btn name="folderClosed" size={9} $w={17} $h={12} /><Btn name="plus" size={8} $w={17} $h={12} />
            <Btn name="trash" size={8} $w={17} $h={12} $dim />
          </LayerFooter>
        </Panels>
      </Body>
      <Watermark>EKOGEA.<span>ORG</span></Watermark>
    </Window>
  );
}
